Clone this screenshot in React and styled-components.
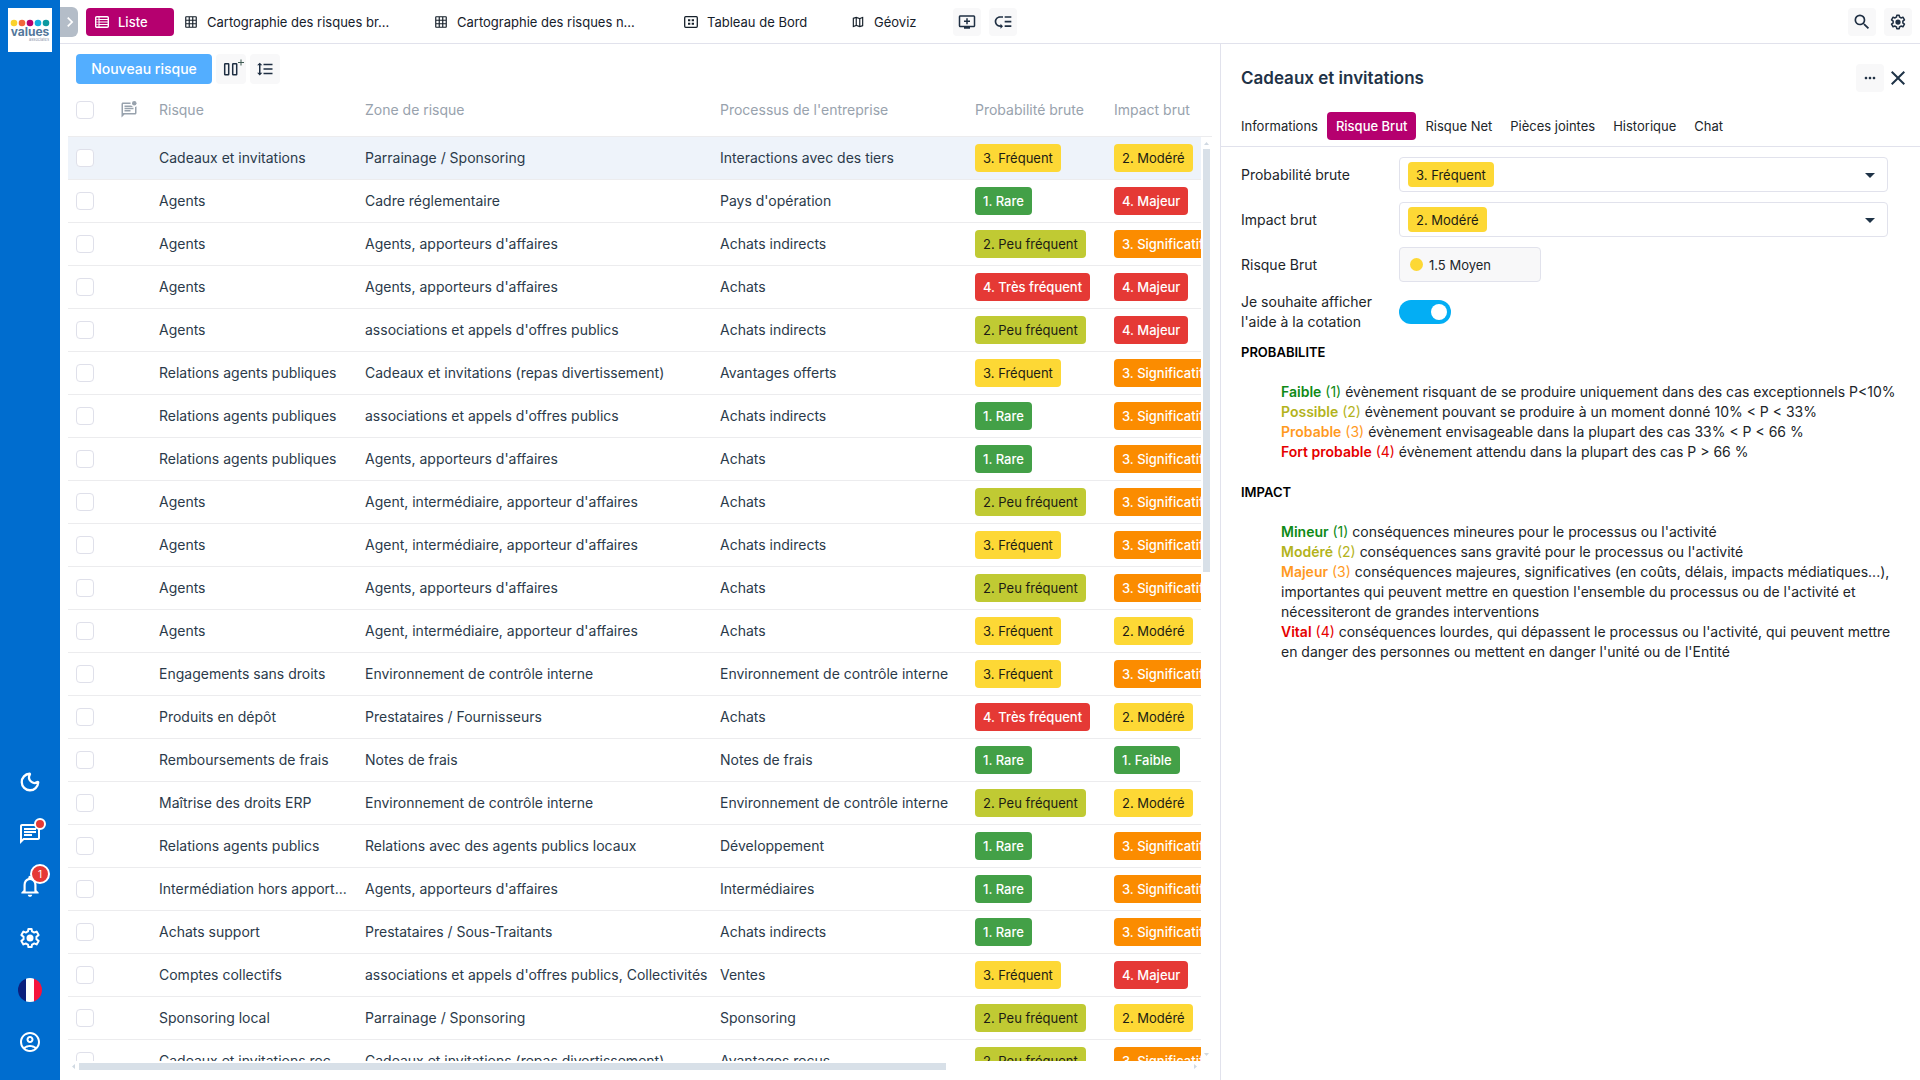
import { useState } from 'react';
import styled, { createGlobalStyle, css } from 'styled-components';
import { Moon } from 'lucide-react';
import {
  MdChevronRight,
  MdClose,
  MdFormatLineSpacing,
  MdLowPriority,
  MdMoreHoriz,
  MdOutlineAccountCircle,
  MdOutlineAddToQueue,
  MdOutlineChat,
  MdOutlineGridOn,
  MdOutlineMap,
  MdOutlineMarkUnreadChatAlt,
  MdOutlineNotifications,
  MdSearch,
  MdArrowDropDown,
} from 'react-icons/md';

const COLORS = {
  yellow: '#fdd835',
  green: '#43a047',
  lime: '#c0ca33',
  red: '#e53935',
  orange: '#fb8c00',
};

const PROBABILITY = {
  1: { label: '1. Rare', color: 'green' },
  2: { label: '2. Peu fréquent', color: 'lime' },
  3: { label: '3. Fréquent', color: 'yellow' },
  4: { label: '4. Très fréquent', color: 'red' },
};

const IMPACT = {
  1: { label: '1. Faible', color: 'green' },
  2: { label: '2. Modéré', color: 'yellow' },
  3: { label: '3. Significatif', color: 'orange' },
  4: { label: '4. Majeur', color: 'red' },
};

// [risque, zone, processus, probabilité, impact]
const ROWS = [
  ['Cadeaux et invitations', 'Parrainage / Sponsoring', 'Interactions avec des tiers', 3, 2],
  ['Agents', 'Cadre réglementaire', "Pays d'opération", 1, 4],
  ['Agents', "Agents, apporteurs d'affaires", 'Achats indirects', 2, 3],
  ['Agents', "Agents, apporteurs d'affaires", 'Achats', 4, 4],
  ['Agents', "associations et appels d'offres publics", 'Achats indirects', 2, 4],
  ['Relations agents publiques', 'Cadeaux et invitations (repas divertissement)', 'Avantages offerts', 3, 3],
  ['Relations agents publiques', "associations et appels d'offres publics", 'Achats indirects', 1, 3],
  ['Relations agents publiques', "Agents, apporteurs d'affaires", 'Achats', 1, 3],
  ['Agents', "Agent, intermédiaire, apporteur d'affaires", 'Achats', 2, 3],
  ['Agents', "Agent, intermédiaire, apporteur d'affaires", 'Achats indirects', 3, 3],
  ['Agents', "Agents, apporteurs d'affaires", 'Achats', 2, 3],
  ['Agents', "Agent, intermédiaire, apporteur d'affaires", 'Achats', 3, 2],
  ['Engagements sans droits', 'Environnement de contrôle interne', 'Environnement de contrôle interne', 3, 3],
  ['Produits en dépôt', 'Prestataires / Fournisseurs', 'Achats', 4, 2],
  ['Remboursements de frais', 'Notes de frais', 'Notes de frais', 1, 1],
  ['Maîtrise des droits ERP', 'Environnement de contrôle interne', 'Environnement de contrôle interne', 2, 2],
  ['Relations agents publics', 'Relations avec des agents publics locaux', 'Développement', 1, 3],
  ['Intermédiation hors apport...', "Agents, apporteurs d'affaires", 'Intermédiaires', 1, 3],
  ['Achats support', 'Prestataires / Sous-Traitants', 'Achats indirects', 1, 3],
  ['Comptes collectifs', "associations et appels d'offres publics, Collectivités", 'Ventes', 3, 4],
  ['Sponsoring local', 'Parrainage / Sponsoring', 'Sponsoring', 2, 2],
  ['Cadeaux et invitations rec...', 'Cadeaux et invitations (repas divertissement)', 'Avantages reçus', 2, 3],
];

const PANEL_TABS = ['Informations', 'Risque Brut', 'Risque Net', 'Pièces jointes', 'Historique', 'Chat'];

const PROBABILITY_HELP = [
  ['Faible', 1, 'évènement risquant de se produire uniquement dans des cas exceptionnels P<10%'],
  ['Possible', 2, 'évènement pouvant se produire à un moment donné 10% < P < 33%'],
  ['Probable', 3, 'évènement envisageable dans la plupart des cas 33% < P < 66 %'],
  ['Fort probable', 4, 'évènement attendu dans la plupart des cas P > 66 %'],
];

const IMPACT_HELP = [
  ['Mineur', 1, "conséquences mineures pour le processus ou l'activité"],
  ['Modéré', 2, "conséquences sans gravité pour le processus ou l'activité"],
  [
    'Majeur',
    3,
    "conséquences majeures, significatives (en coûts, délais, impacts médiatiques...), importantes qui peuvent mettre en question l'ensemble du processus ou de l'activité et nécessiteront de grandes interventions",
  ],
  [
    'Vital',
    4,
    "conséquences lourdes, qui dépassent le processus ou l'activité, qui peuvent mettre en danger des personnes ou mettent en danger l'unité ou de l'Entité",
  ],
];

const LEVEL_COLORS = { 1: '#0f8a16', 2: '#b3b31c', 3: '#ff9a1f', 4: '#e60000' };

/* ---------- icons ---------- */

const GearIcon = ({ size = 20 }) => (
  <svg width={size} height={size} viewBox='0 0 24 24' fill='none' stroke='currentColor' strokeWidth='2' strokeLinejoin='round'>
    <path d='M18.4 13.2c.1-.4.1-.8.1-1.2s0-.8-.1-1.2l2.2-1.7-2-3.5-2.6 1c-.6-.5-1.3-.9-2-1.2L13.600 3h-3.200L10 5.400c-.7.300-1.400.700-2 1.200l-2.600-1-2 3.500 2.200 1.700c-.1.400-.1.800-.1 1.200s0 .8.1 1.200l-2.200 1.700 2 3.500 2.600-1c.6.5 1.300.9 2 1.200l.4 2.400h3.200l.4-2.400c.7-.3 1.400-.7 2-1.200l2.600 1 2-3.500z' />
    <circle cx='12' cy='12' r='3.500' fill='currentColor' stroke='none' />
  </svg>
);

const ListIcon = () => (
  <svg width='14' height='14' viewBox='0 0 14 14' fill='none' stroke='currentColor'>
    <rect x='.7' y='1.700' width='12.600' height='10.600' rx='1' strokeWidth='1.400' />
    <path d='M4 2v10M4 4.500h9M4 7h9M4 9.500h9' strokeWidth='1' />
    <path d='M1 4.500h3M1 7h3M1 9.500h3' strokeWidth='.6' />
  </svg>
);

const BoardIcon = () => (
  <svg width='14' height='14' viewBox='0 0 14 14' fill='none' stroke='currentColor'>
    <rect x='.7' y='1.700' width='12.600' height='10.600' rx='1' strokeWidth='1.300' />
    <path d='M4 4.200h2.300v2H4zM7.700 4.200H10v2H7.700zM4 7.800h2.300v2H4zM7.700 7.800H10v2H7.700z' fill='currentColor' stroke='none' />
  </svg>
);

const ColumnsIcon = () => (
  <svg width='26' height='20' viewBox='0 0 26 20' fill='none' stroke='currentColor' strokeWidth='1.500'>
    <rect x='6.700' y='4.700' width='4' height='11' rx='.5' />
    <rect x='14.700' y='4.700' width='4' height='11' rx='.5' />
    <path d='M23 .5v6M20 3.500h6' strokeWidth='1' stroke='#3f5a52' />
  </svg>
);

const Logo = () => (
  <svg width='44' height='44' viewBox='0 0 44 44' role='img' aria-label='values associates'>
    <rect width='44' height='44' fill='#fff' />
    <circle cx='6' cy='15' r='3.300' fill='#fbd22c' />
    <circle cx='14' cy='15' r='3.300' fill='#f2673a' />
    <circle cx='22' cy='15' r='3.300' fill='#b5006f' />
    <circle cx='30' cy='15' r='3.300' fill='#12aee0' />
    <circle cx='38' cy='15' r='3.300' fill='#0d9aa0' />
    <text x='22' y='28' textAnchor='middle' fontSize='12' fontWeight='700' fill='#53789b'>
      values
    </text>
    <text x='41' y='33' textAnchor='end' fontSize='4' fill='#8a94ab'>
      associates
    </text>
  </svg>
);

const FrenchFlag = () => (
  <svg width='24' height='24' viewBox='0 0 24 24'>
    <clipPath id='flag-disc'>
      <circle cx='12' cy='12' r='12' />
    </clipPath>
    <g clipPath='url(#flag-disc)'>
      <rect width='8' height='24' fill='#0b1f7d' />
      <rect x='8' width='8' height='24' fill='#fff' />
      <rect x='16' width='8' height='24' fill='#f5143c' />
    </g>
  </svg>
);

/* ---------- sections ---------- */

const Sidebar = () => (
  <StSidebar>
    <StLogoLink href='#' aria-label='Accueil'>
      <Logo />
    </StLogoLink>
    <StSideNav>
      <StSideButton aria-label='Mode sombre'>
        <Moon size={22} strokeWidth={2.5} />
      </StSideButton>
      <StSideButton aria-label='Messages'>
        <MdOutlineChat size={24} />
        <StDot />
      </StSideButton>
      <StSideButton aria-label='Notifications'>
        <MdOutlineNotifications size={26} />
        <StCount>1</StCount>
      </StSideButton>
      <StSideButton aria-label='Paramètres'>
        <GearIcon size={24} />
      </StSideButton>
      <StSideButton aria-label='Langue'>
        <FrenchFlag />
      </StSideButton>
      <StSideButton aria-label='Compte'>
        <MdOutlineAccountCircle size={24} />
      </StSideButton>
    </StSideNav>
  </StSidebar>
);

const TopBar = () => (
  <StTopBar>
    <StCollapse aria-label='Ouvrir le menu'>
      <MdChevronRight size={20} />
    </StCollapse>
    <StViewTabs>
      <StViewTab $active>
        <ListIcon />
        <span>Liste</span>
      </StViewTab>
      <StViewTab $labelWidth={193}>
        <MdOutlineGridOn size={14} />
        <span>Cartographie des risques br...</span>
      </StViewTab>
      <StViewTab $labelWidth={193}>
        <MdOutlineGridOn size={14} />
        <span>Cartographie des risques n...</span>
      </StViewTab>
      <StViewTab $labelWidth={110}>
        <BoardIcon />
        <span>Tableau de Bord</span>
      </StViewTab>
      <StViewTab $labelWidth={47}>
        <MdOutlineMap size={14} />
        <span>Géoviz</span>
      </StViewTab>
    </StViewTabs>
    <StIconGroup>
      <StIconButton aria-label='Ajouter une vue'>
        <MdOutlineAddToQueue size={18} />
      </StIconButton>
      <StIconButton aria-label='Réorganiser les vues'>
        <MdLowPriority size={20} />
      </StIconButton>
    </StIconGroup>
    <StIconGroup $end>
      <StIconButton aria-label='Rechercher'>
        <MdSearch size={20} />
      </StIconButton>
      <StIconButton aria-label='Configuration'>
        <GearIcon size={18} />
      </StIconButton>
    </StIconGroup>
  </StTopBar>
);

const RiskTable = () => (
  <StTableArea>
    <StTableClip>
      <StTable>
        <colgroup>
          <StCol $width={44} />
          <StCol $width={39} />
          <StCol $width={206} />
          <StCol $width={355} />
          <StCol $width={255} />
          <StCol $width={139} />
          <StCol $width={160} />
        </colgroup>
        <thead>
          <tr>
            <th>
              <StCheckbox aria-label='Tout sélectionner' />
            </th>
            <th aria-label='Commentaires'>
              <MdOutlineMarkUnreadChatAlt size={18} />
            </th>
            <th>Risque</th>
            <th>Zone de risque</th>
            <th>Processus de l'entreprise</th>
            <th>Probabilité brute</th>
            <th>Impact brut</th>
          </tr>
        </thead>
        <tbody>
          {ROWS.map(([risk, zone, process, probability, impact], index) => (
            <StRow key={index} $selected={index === 0}>
              <td>
                <StCheckbox aria-label={`Sélectionner ${risk}`} />
              </td>
              <td />
              <td>{risk}</td>
              <td>{zone}</td>
              <td>{process}</td>
              <td>
                <StBadge $color={PROBABILITY[probability].color}>{PROBABILITY[probability].label}</StBadge>
              </td>
              <td>
                <StBadge $color={IMPACT[impact].color}>{IMPACT[impact].label}</StBadge>
              </td>
            </StRow>
          ))}
        </tbody>
      </StTable>
    </StTableClip>
    <StVerticalBar>
      <StArrow $dir='up' />
      <StTrack>
        <StVerticalThumb />
      </StTrack>
      <StArrow $dir='down' />
    </StVerticalBar>
    <StHorizontalBar>
      <StArrow $dir='left' />
      <StTrack>
        <StHorizontalThumb />
      </StTrack>
      <StArrow $dir='right' />
    </StHorizontalBar>
  </StTableArea>
);

const BadgeSelect = ({ id, options, value, onChange }) => (
  <StSelectBox>
    <StSelect id={id} $color={options[value].color} value={value} onChange={(e) => onChange(e.target.value)}>
      {Object.entries(options).map(([key, { label }]) => (
        <option key={key} value={key}>
          {label}
        </option>
      ))}
    </StSelect>
    <MdArrowDropDown size={24} />
  </StSelectBox>
);

const HelpSection = ({ title, items }) => (
  <StHelp>
    <h3>{title}</h3>
    <ul>
      {items.map(([name, level, text]) => (
        <li key={name}>
          <StLevel $level={level}>
            <strong>{name}</strong> ({level})
          </StLevel>{' '}
          {text}
        </li>
      ))}
    </ul>
  </StHelp>
);

const DetailPanel = () => {
  const [tab, setTab] = useState('Risque Brut');
  const [probability, setProbability] = useState(3);
  const [impact, setImpact] = useState(2);
  const [showHelp, setShowHelp] = useState(true);

  return (
    <StPanel>
      <StPanelHeader>
        <h2>Cadeaux et invitations</h2>
        <StIconButton aria-label="Plus d'actions">
          <MdMoreHoriz size={16} />
        </StIconButton>
        <StCloseButton aria-label='Fermer'>
          <MdClose size={24} />
        </StCloseButton>
      </StPanelHeader>
      <StPanelTabs>
        {PANEL_TABS.map((name) => (
          <StPanelTab key={name} $active={name === tab} onClick={() => setTab(name)}>
            {name}
          </StPanelTab>
        ))}
      </StPanelTabs>
      <StForm>
        <label htmlFor='probability'>Probabilité brute</label>
        <BadgeSelect id='probability' options={PROBABILITY} value={probability} onChange={setProbability} />
        <label htmlFor='impact'>Impact brut</label>
        <BadgeSelect id='impact' options={IMPACT} value={impact} onChange={setImpact} />
        <label htmlFor='score'>Risque Brut</label>
        <StScore id='score'>1.5 Moyen</StScore>
        <label htmlFor='help'>Je souhaite afficher l'aide à la cotation</label>
        <StSwitch id='help' checked={showHelp} onChange={(e) => setShowHelp(e.target.checked)} />
      </StForm>
      {showHelp && (
        <>
          <HelpSection title='PROBABILITE' items={PROBABILITY_HELP} />
          <HelpSection title='IMPACT' items={IMPACT_HELP} />
        </>
      )}
    </StPanel>
  );
};

export default function App() {
  return (
    <>
      <GlobalStyle />
      <StShell>
        <Sidebar />
        <TopBar />
        <StList>
          <StToolbar>
            <StPrimaryButton>Nouveau risque</StPrimaryButton>
            <StIconButton $large aria-label='Colonnes'>
              <ColumnsIcon />
            </StIconButton>
            <StIconButton $large aria-label='Hauteur de ligne'>
              <MdFormatLineSpacing size={18} />
            </StIconButton>
          </StToolbar>
          <RiskTable />
        </StList>
        <DetailPanel />
      </StShell>
    </>
  );
}

/* ---------- styles ---------- */

const GlobalStyle = createGlobalStyle`
  * {
    box-sizing: border-box;
  }
  body {
    margin: 0;
    background: #fff;
    color: #212529;
    font-family: 'Inter', 'Liberation Sans', sans-serif;
    font-size: 13px;
    line-height: 20px;
  }
  button, select, input {
    font: inherit;
    color: inherit;
  }
  button {
    border: 0;
    padding: 0;
    background: none;
    cursor: pointer;
  }
  svg {
    display: block;
    flex-shrink: 0;
  }
`;

const StShell = styled.div`
  display: grid;
  grid-template-columns: 60px minmax(0, 1fr) 700px;
  grid-template-rows: 44px minmax(0, 1fr);
  height: 100vh;
  overflow: hidden;
`;

const StSidebar = styled.aside`
  grid-row: 1 / 3;
  display: flex;
  flex-direction: column;
  justify-content: space-between;
  align-items: center;
  padding: 8px 0 12px;
  background: #006dcf;
  color: #fff;
`;

const StLogoLink = styled.a`
  display: block;
`;

const StSideNav = styled.nav`
  display: flex;
  flex-direction: column;
`;

const StSideButton = styled.button`
  position: relative;
  display: grid;
  place-items: center;
  width: 60px;
  height: 52px;
`;

const StDot = styled.span`
  position: absolute;
  top: 10px;
  right: 14px;
  width: 12px;
  height: 12px;
  border: 2px solid #fff;
  border-radius: 50%;
  background: #e53935;
`;

const StCount = styled.span`
  position: absolute;
  top: 4px;
  right: 10px;
  width: 20px;
  height: 20px;
  border: 2px solid #fff;
  border-radius: 50%;
  background: #e53935;
  font-size: 10px;
  line-height: 16px;
  text-align: center;
`;

const StTopBar = styled.header`
  grid-column: 2 / 4;
  display: flex;
  align-items: center;
  padding-right: 8px;
  border-bottom: 1px solid #e1e2ec;
`;

const StCollapse = styled.button`
  display: grid;
  place-items: center;
  width: 18px;
  height: 30px;
  margin-right: 8px;
  border-radius: 0 6px 6px 0;
  background: #b4bdc8;
  color: #fff;
`;

const StViewTabs = styled.nav`
  display: flex;
  gap: 1px;
`;

const StViewTab = styled.button`
  display: flex;
  align-items: center;
  gap: 9px;
  height: 28px;
  padding: 0 24px 0 9px;
  border-radius: 4px;
  color: #16202a;
  white-space: nowrap;

  span {
    min-width: ${(props) => (props.$labelWidth ? `${props.$labelWidth}px` : '32px')};
    text-align: left;
  }

  ${(props) =>
    props.$active &&
    css`
      background: #b5006f;
      color: #fff;
      font-weight: 500;
    `}
`;

const StIconGroup = styled.div`
  display: flex;
  gap: 8px;
  margin-left: ${(props) => (props.$end ? 'auto' : '8px')};
`;

const StIconButton = styled.button`
  display: grid;
  place-items: center;
  width: ${(props) => (props.$large ? 30 : 28)}px;
  height: ${(props) => (props.$large ? 30 : 28)}px;
  border-radius: 4px;
  background: #f8f8f9;
  color: #1f2f43;
`;

const StList = styled.main`
  display: flex;
  flex-direction: column;
  min-height: 0;
  padding: 10px 8px 8px;
`;

const StToolbar = styled.div`
  display: flex;
  gap: 4px;
  padding-left: 8px;
`;

const StPrimaryButton = styled.button`
  height: 30px;
  width: 136px;
  border-radius: 4px;
  background: #53aeff;
  color: #fff;
  font-size: 14px;
  font-weight: 500;
`;

const StTableArea = styled.div`
  flex: 1;
  min-height: 0;
  display: grid;
  grid-template-columns: minmax(0, 1fr) 11px;
  grid-template-rows: minmax(0, 1fr) 11px;
`;

const StTableClip = styled.div`
  overflow: hidden;
`;

const StTable = styled.table`
  width: 100%;
  min-width: 1198px;
  table-layout: fixed;
  border-collapse: separate;
  border-spacing: 0;
  font-size: 14px;

  th,
  td {
    height: 43px;
    padding: 0 8px;
    border-bottom: 1px solid #ececee;
    text-align: left;
    white-space: nowrap;
  }
  th {
    height: 53px;
    color: #98a2ad;
    font-weight: 400;
  }
  td {
    color: #2b3a4a;
  }
`;

const StCol = styled.col`
  width: ${(props) => props.$width}px;
`;

const StRow = styled.tr`
  background: ${(props) => (props.$selected ? '#eef3fa' : '#fff')};
`;

const StCheckbox = styled.input.attrs({ type: 'checkbox' })`
  appearance: none;
  display: block;
  width: 18px;
  height: 18px;
  margin: 0;
  border: 1px solid #dfe0ea;
  border-radius: 4px;
  background: #fff;

  &:checked {
    background: #006dcf;
  }
`;

const badgeColors = css`
  background: ${(props) => COLORS[props.$color]};
  color: ${(props) => (['yellow', 'lime'].includes(props.$color) ? '#1c1c14' : '#fff')};
  font-size: 13px;
  font-weight: ${(props) => (['yellow', 'lime'].includes(props.$color) ? 400 : 500)};
`;

const StBadge = styled.span`
  display: inline-block;
  padding: 0 8px;
  border-radius: 4px;
  line-height: 28px;
  vertical-align: middle;
  ${badgeColors}
`;

const StTrack = styled.div`
  flex: 1;
  display: flex;
  flex-direction: inherit;
`;

const StVerticalBar = styled.div`
  display: flex;
  flex-direction: column;
  align-items: center;
  gap: 4px;
  margin-top: 52px;
  padding: 5px 0;
  border-top: 1px solid #ececee;
`;

const StHorizontalBar = styled.div`
  display: flex;
  align-items: center;
  gap: 4px;
  padding: 2px 4px;
`;

const StVerticalThumb = styled.div`
  width: 7px;
  height: 47%;
  background: #d8e0e8;
`;

const StHorizontalThumb = styled.div`
  width: 78%;
  height: 7px;
  background: #d8e0e8;
`;

const arrowShapes = {
  up: 'polygon(50% 0, 100% 100%, 0 100%)',
  down: 'polygon(0 0, 100% 0, 50% 100%)',
  left: 'polygon(100% 0, 100% 100%, 0 50%)',
  right: 'polygon(0 0, 100% 50%, 0 100%)',
};

const StArrow = styled.i`
  width: ${(props) => (['up', 'down'].includes(props.$dir) ? 5 : 3)}px;
  height: ${(props) => (['up', 'down'].includes(props.$dir) ? 3 : 5)}px;
  background: #d0d9e2;
  clip-path: ${(props) => arrowShapes[props.$dir]};
`;

const StPanel = styled.section`
  padding: 20px 0;
  border-left: 1px solid #e1e2ec;
  overflow: hidden;
`;

const StPanelHeader = styled.div`
  display: flex;
  align-items: center;
  padding: 0 10px 0 20px;

  h2 {
    flex: 1;
    margin: 0;
    color: #1f3347;
    font-size: 17px;
    font-weight: 600;
  }
`;

const StCloseButton = styled.button`
  margin-left: 2px;
  color: #1f3347;
`;

const StPanelTabs = styled.nav`
  display: flex;
  padding: 20px 11px 6px;
  border-bottom: 1px solid #e1e2ec;
`;

const StPanelTab = styled.button`
  height: 28px;
  padding: 0 9px;
  border-radius: 4px;
  white-space: nowrap;

  ${(props) =>
    props.$active &&
    css`
      background: #b5006f;
      color: #fff;
      font-weight: 500;
    `}
`;

const StForm = styled.form`
  display: grid;
  grid-template-columns: 138px minmax(0, 1fr);
  align-items: center;
  gap: 10px 20px;
  padding: 10px 32px 10px 20px;
  font-size: 14px;
`;

const StSelectBox = styled.div`
  display: flex;
  align-items: center;
  justify-content: space-between;
  height: 35px;
  padding: 0 5px 0 8px;
  border: 1px solid #e1e2ec;
  border-radius: 4px;
  color: #1f3347;
`;

const StSelect = styled.select`
  appearance: none;
  field-sizing: content;
  height: 25px;
  padding: 0 8px;
  border: 0;
  border-radius: 4px;
  ${badgeColors}
`;

const StScore = styled.output`
  display: flex;
  align-items: center;
  gap: 6px;
  width: 142px;
  height: 35px;
  padding: 0 10px;
  border: 1px solid #e1e2ec;
  border-radius: 4px;
  background: #f8f8f9;
  font-size: 13px;

  &::before {
    content: '';
    width: 13px;
    height: 13px;
    border-radius: 50%;
    background: #fdd835;
  }
`;

const StSwitch = styled.input.attrs({ type: 'checkbox' })`
  appearance: none;
  display: flex;
  align-items: center;
  width: 52px;
  height: 24px;
  margin: 0;
  padding: 0 4px;
  border-radius: 12px;
  background: #b4bdc8;

  &::before {
    content: '';
    width: 16px;
    height: 16px;
    border-radius: 50%;
    background: #fff;
  }
  &:checked {
    justify-content: flex-end;
    background: #03aef4;
  }
`;

const StHelp = styled.div`
  padding: 0 20px;

  h3 {
    margin: 0 0 20px;
    color: #000;
    font-size: 13px;
    font-weight: 600;
    line-height: 20px;
  }
  ul {
    margin: 0 0 20px;
    padding: 0 0 0 40px;
    font-size: 14px;
    list-style: none;
  }
`;

const StLevel = styled.span`
  color: ${(props) => LEVEL_COLORS[props.$level]};

  strong {
    font-weight: 600;
  }
`;
